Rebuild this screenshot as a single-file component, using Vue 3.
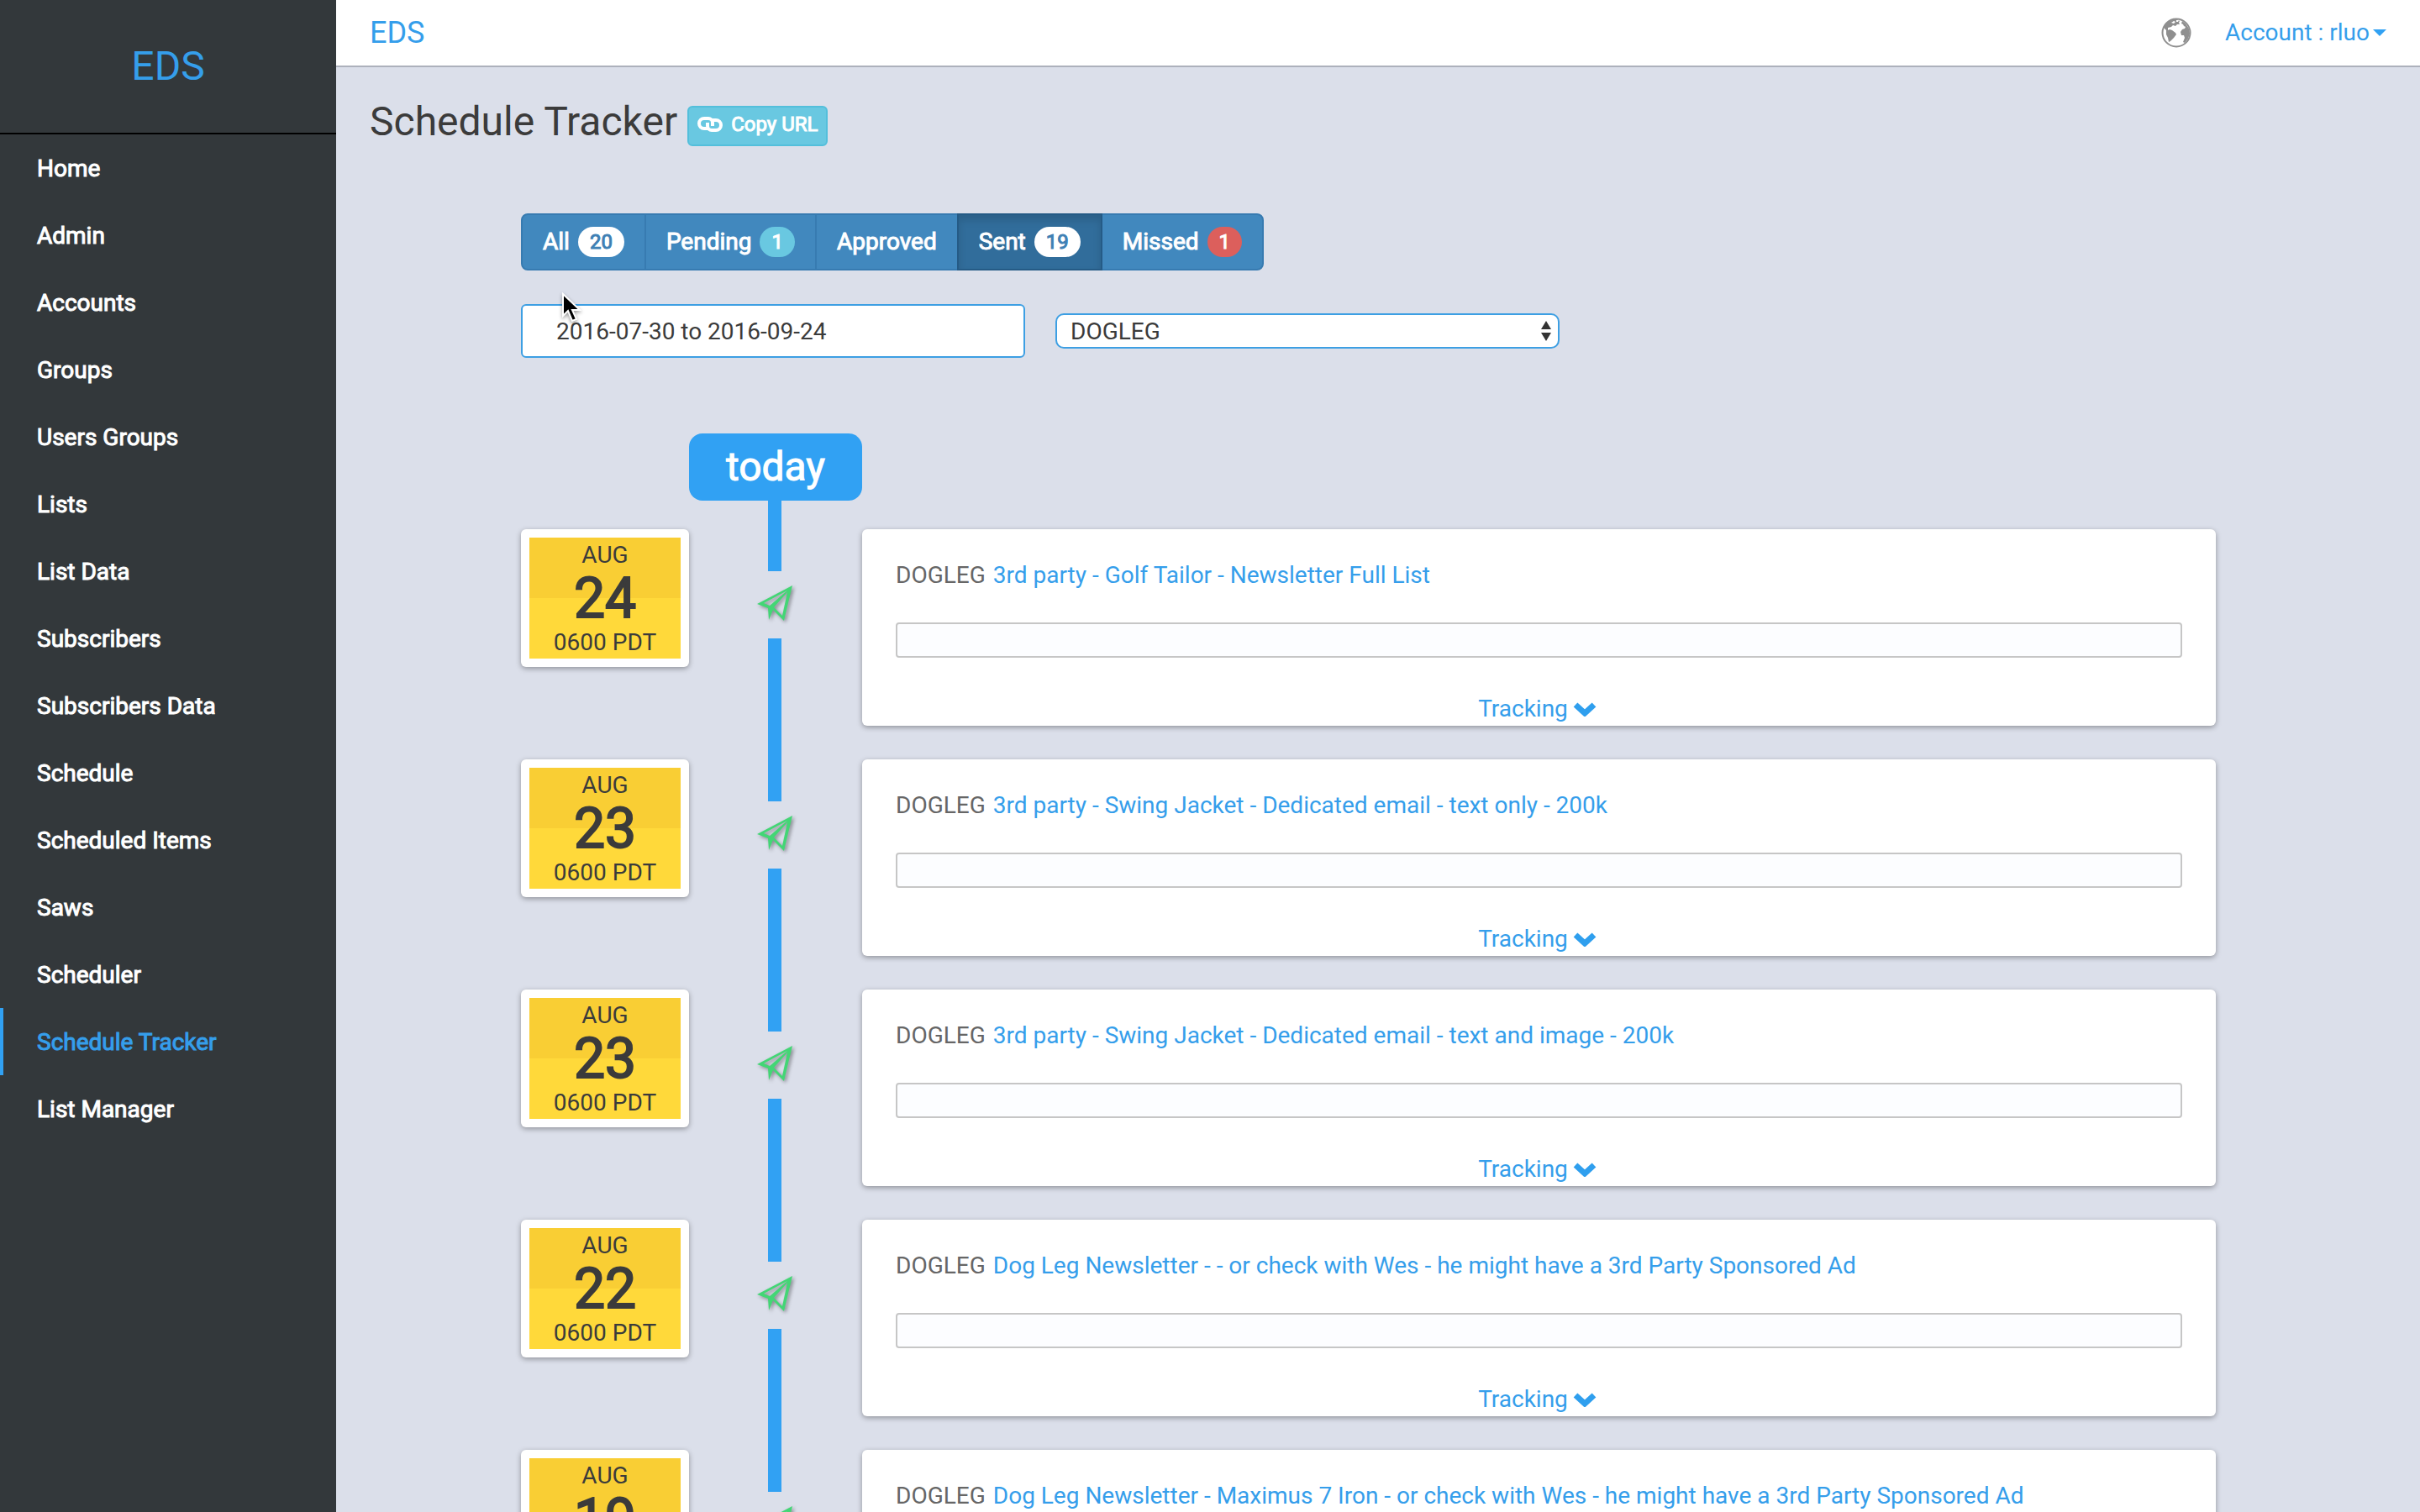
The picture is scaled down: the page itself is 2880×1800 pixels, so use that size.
<script setup>
import { ref } from 'vue'

const navItems = [
  'Home', 'Admin', 'Accounts', 'Groups', 'Users Groups', 'Lists', 'List Data',
  'Subscribers', 'Subscribers Data', 'Schedule', 'Scheduled Items', 'Saws',
  'Scheduler', 'Schedule Tracker', 'List Manager'
]
const current = 'Schedule Tracker'

const filters = [
  { label: 'All', count: 20, tone: 'plain' },
  { label: 'Pending', count: 1, tone: 'info' },
  { label: 'Approved' },
  { label: 'Sent', count: 19, tone: 'plain' },
  { label: 'Missed', count: 1, tone: 'danger' }
]
const activeFilter = ref('Sent')
const dateRange = ref('2016-07-30 to 2016-09-24')
const list = ref('DOGLEG')

const entries = [
  { day: 24, title: '3rd party - Golf Tailor - Newsletter Full List' },
  { day: 23, title: '3rd party - Swing Jacket - Dedicated email - text only - 200k' },
  { day: 23, title: '3rd party - Swing Jacket - Dedicated email - text and image - 200k' },
  { day: 22, title: 'Dog Leg Newsletter - - or check with Wes - he might have a 3rd Party Sponsored Ad' },
  { day: 19, title: 'Dog Leg Newsletter - Maximus 7 Iron - or check with Wes - he might have a 3rd Party Sponsored Ad' }
]
</script>

<template>
  <div class="app">
    <aside class="sidebar">
      <a class="brand" href="#">EDS</a>
      <nav class="nav">
        <a v-for="item in navItems" :key="item" href="#" :class="{ active: item === current }">{{ item }}</a>
      </nav>
    </aside>

    <div class="page">
      <header class="topbar">
        <a class="topbar-brand" href="#">EDS</a>
        <div class="topbar-right">
          <svg class="globe" viewBox="0 0 36 36" aria-hidden="true">
            <circle cx="18" cy="18" r="16.5" fill="#fff" stroke="#8f8f8f" stroke-width="2" />
            <path fill="#8f8f8f" d="M4 9 8 5l5-3 6 0 3 2-1 2 1 2-3 0-2 2-3-1-2 2-4 1 0 3 2-1 3 1 4 3 1 2-3 4-4 4-2 1-1-5-2-4 0-5-3-3z" />
            <path fill="#fff" d="m12 6 3-2 2 1-2 2zM18 3l3 0-1 2-2 0z" />
            <path fill="#8f8f8f" d="m25 4 4 3 4 6 1 6-2 6-4 5-2-1 2-5-1-3-3 0-1-4 2-3 3-1 1-2-2-1-1-2-2-1z" />
          </svg>
          <button class="account" type="button">Account : rluo<span class="caret"></span></button>
        </div>
      </header>

      <main class="content">
        <div class="heading">
          <h1>Schedule Tracker</h1>
          <button class="copy" type="button">
            <svg viewBox="0 0 30 18" aria-hidden="true">
              <path
                d="M12 14H8a6 6 0 0 1 0-12h5a5 5 0 0 1 5 5v4M18 4h4a6 6 0 0 1 0 12h-5a5 5 0 0 1-5-5V7"
                fill="none"
                stroke="#fff"
                stroke-width="4"
              />
            </svg>
            Copy URL
          </button>
        </div>

        <section class="tracker">
          <div class="filters">
            <button
              v-for="f in filters"
              :key="f.label"
              type="button"
              :class="{ active: f.label === activeFilter }"
              @click="activeFilter = f.label"
            >
              {{ f.label }}<span v-if="f.count" class="badge" :class="f.tone">{{ f.count }}</span>
            </button>
          </div>

          <div class="inputs">
            <input v-model="dateRange" class="range" type="text" aria-label="Date range" />
            <div class="select-wrap">
              <select v-model="list" aria-label="List">
                <option>DOGLEG</option>
              </select>
              <svg class="updown" viewBox="0 0 12 24" aria-hidden="true">
                <path d="M0 10 6 0l6 10zM0 14h12L6 24z" fill="#333" />
              </svg>
            </div>
            <svg class="pointer" viewBox="0 0 24 36" aria-hidden="true">
              <path d="M2 2v26l6-6 5 12 5-2-5-11h9z" fill="#000" stroke="#fff" stroke-width="2" />
            </svg>
          </div>

          <div class="timeline">
            <div class="today">today</div>
            <div class="stem"></div>
            <article v-for="(e, i) in entries" :key="i" class="entry">
              <div class="date-card">
                <div class="date">
                  <span>AUG</span>
                  <strong>{{ e.day }}</strong>
                  <span>0600 PDT</span>
                </div>
              </div>
              <div class="marker">
                <div class="line top"></div>
                <svg class="plane" viewBox="0 0 44 44" aria-hidden="true">
                  <path fill="#43d675" fill-rule="evenodd" d="M43 1 33 43 20 30 15 42 14 28 1 23zM37 7 9 22 16 25zM37 9 21 27 31 37z" />
                </svg>
                <div class="line bottom"></div>
              </div>
              <div class="card">
                <div class="title"><span>DOGLEG</span><a href="#">{{ e.title }}</a></div>
                <input type="text" :aria-label="'Notes for ' + e.title" />
                <button class="tracking" type="button">
                  Tracking
                  <svg viewBox="0 0 28 18" aria-hidden="true">
                    <path d="m3 4 11 10L25 4" fill="none" stroke="#2f9fee" stroke-width="7" />
                  </svg>
                </button>
              </div>
            </article>
          </div>
        </section>
      </main>
    </div>
  </div>
</template>

<style>
body {
  background: #dbdfea;
}
</style>

<style scoped>
.app {
  display: flex;
  height: 100vh;
  background: #dbdfea;
  color: #3b3b3b;
  font: 28px/40px Roboto, "Liberation Sans", sans-serif;
}
.app *,
.app *::before {
  box-sizing: border-box;
}
a {
  color: #359eeb;
  text-decoration: none;
}
button,
input,
select {
  margin: 0;
  color: inherit;
  font: inherit;
}
.sidebar {
  flex: 0 0 400px;
  background: #33383b;
}
.brand {
  display: flex;
  align-items: center;
  justify-content: center;
  height: 160px;
  border-bottom: 2px solid #000;
  font-size: 48px;
}
.nav a {
  display: flex;
  align-items: center;
  height: 80px;
  padding: 2px 0 0 40px;
  border-left: 4px solid transparent;
  color: #fff;
}
.nav a,
.copy,
.filters button {
  -webkit-text-stroke: 1px currentColor;
}
.nav a.active {
  border-left-color: #31a1f3;
  color: #359eeb;
}
.page {
  flex: 1;
  min-width: 0;
  overflow-y: auto;
  scrollbar-width: none;
}
.topbar {
  display: flex;
  align-items: center;
  justify-content: space-between;
  height: 80px;
  padding: 0 40px;
  border-bottom: 2px solid #adb1bc;
  background: #fff;
}
.topbar-brand {
  font-size: 36px;
}
.topbar-right {
  display: flex;
  align-items: center;
  gap: 40px;
}
.globe {
  width: 36px;
  height: 36px;
}
.account {
  display: flex;
  align-items: center;
  gap: 4px;
  padding: 0;
  border: 0;
  background: none;
  color: #359eeb;
}
.caret {
  border: 8px solid transparent;
  border-top-color: #31a1f3;
  border-bottom: 0;
}
.content {
  padding: 36px 40px;
}
.heading {
  display: flex;
  align-items: flex-end;
  gap: 12px;
  height: 58px;
}
h1 {
  margin: 0;
  font-size: 48px;
  font-weight: 400;
  line-height: 58px;
}
.copy {
  display: flex;
  align-items: center;
  gap: 10px;
  height: 48px;
  padding: 0 10px 4px;
  border: 2px solid #53bfdb;
  border-radius: 6px;
  background: #69c8e1;
  color: #fff;
  font-size: 24px;
}
.copy svg {
  width: 30px;
  height: 18px;
}
.tracker {
  padding: 80px 203px 0 180px;
}
.filters {
  display: flex;
}
.filters button {
  display: flex;
  align-items: center;
  gap: 10px;
  height: 68px;
  margin-right: -2px;
  padding: 0 24px;
  border: 2px solid #377bb1;
  background: #4188be;
  color: #fff;
}
.filters button:first-child {
  border-radius: 8px 0 0 8px;
}
.filters button:last-child {
  border-radius: 0 8px 8px 0;
}
.filters button.active {
  z-index: 1;
  border-color: #255b86;
  background: #316d9b;
  box-shadow: inset 0 6px 10px rgba(0, 0, 0, 0.125);
}
.badge {
  height: 36px;
  padding: 0 14px;
  border-radius: 18px;
  color: #fff;
  font-size: 24px;
  line-height: 36px;
}
.badge.plain {
  background: #fff;
  color: #3e80b4;
}
.badge.info {
  background: #69c8e1;
}
.badge.danger {
  background: #dc5f5c;
}
.inputs {
  position: relative;
  display: flex;
  align-items: center;
  gap: 36px;
  margin-top: 40px;
}
.range {
  width: 600px;
  height: 64px;
  padding: 0 40px;
  border: 2px solid #3d9fe3;
  border-radius: 6px;
  background: #fff;
}
.select-wrap {
  position: relative;
  width: 600px;
}
select {
  display: block;
  width: 100%;
  height: 42px;
  padding: 0 16px;
  border: 2px solid #3d9fe3;
  border-radius: 10px;
  background: #fff;
  appearance: none;
}
.updown {
  position: absolute;
  top: 9px;
  right: 10px;
  width: 12px;
  height: 24px;
  pointer-events: none;
}
.pointer {
  position: absolute;
  top: -14px;
  left: 48px;
  width: 24px;
  height: 36px;
  filter: drop-shadow(0 2px 2px rgba(0, 0, 0, 0.4));
}
.timeline {
  margin-top: 90px;
}
.today {
  width: 206px;
  height: 80px;
  margin-left: 200px;
  border-radius: 16px;
  background: #31a1f3;
  color: #fff;
  font-size: 48px;
  line-height: 80px;
  text-align: center;
  -webkit-text-stroke: 1px currentColor;
}
.stem {
  width: 16px;
  height: 34px;
  margin-left: 294px;
  background: #31a1f3;
}
.entry {
  display: grid;
  grid-template-columns: 200px 206px 1fr;
  align-items: start;
}
.date-card,
.card {
  border-radius: 6px;
  background: #fff;
  box-shadow: 0 2px 6px rgba(0, 0, 0, 0.35);
}
.date-card {
  padding: 10px;
}
.date {
  display: flex;
  flex-direction: column;
  align-items: center;
  height: 144px;
  padding-top: 1px;
  background: linear-gradient(#f9ce34 50%, #ffd93a 50%);
}
.date strong {
  height: 64px;
  font-size: 66px;
  font-weight: 400;
  line-height: 64px;
  -webkit-text-stroke: 2px currentColor;
}
.marker {
  display: flex;
  flex-direction: column;
  align-items: center;
  padding-right: 2px;
}
.line {
  width: 16px;
  background: #31a1f3;
}
.line.top {
  height: 50px;
}
.line.bottom {
  height: 144px;
}
.plane {
  width: 44px;
  height: 44px;
  margin: 16px 0 20px;
  filter: drop-shadow(2px 2px 2px rgba(0, 0, 0, 0.4));
}
.card {
  display: flex;
  flex-direction: column;
  height: 234px;
  padding: 35px 40px 0;
}
.title {
  display: flex;
  gap: 9px;
  color: #666;
}
.card input {
  width: 100%;
  height: 44px;
  margin-top: 36px;
  padding: 0 12px;
  border: 2px solid #c6c6c6;
  border-radius: 4px;
  background: #fcfdff;
}
.tracking {
  display: flex;
  align-items: center;
  align-self: center;
  gap: 6px;
  margin-top: 41px;
  padding: 0 4px 0 0;
  border: 0;
  background: none;
  color: #359eeb;
}
.tracking svg {
  width: 28px;
  height: 18px;
}
</style>
